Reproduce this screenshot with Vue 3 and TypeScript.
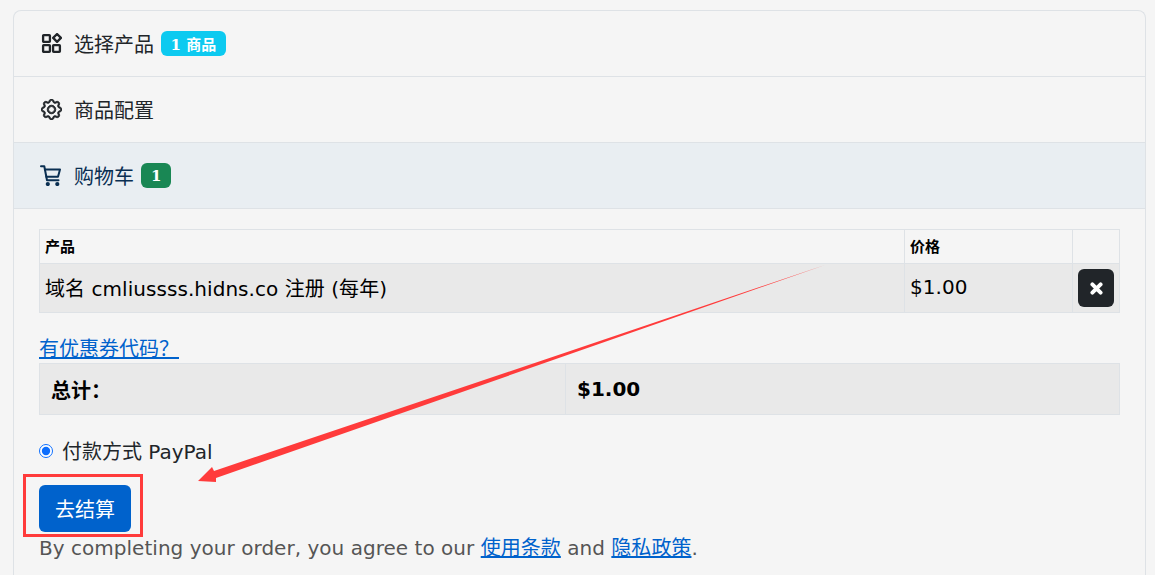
<script setup lang="ts">
</script>

<template>
  <div class="page">
    <section class="accordion">
      <div class="step">
        <svg class="icon" viewBox="0 0 20 20" fill="none" stroke="currentColor" stroke-width="2.200">
          <rect x="2" y="2" width="6.500" height="6.500" rx=".6" />
          <rect x="2" y="11.500" width="6.500" height="6.500" rx=".6" />
          <rect x="11.500" y="11.500" width="6.500" height="6.500" rx=".6" />
          <path d="M15.300 1 19 4.700 15.300 8.400 11.600 4.700z" stroke-linejoin="round" />
        </svg>
        <span class="label">选择产品</span>
        <span class="badge info">1 商品</span>
      </div>
      <div class="step">
        <svg class="icon" viewBox="0 0 16 16" fill="currentColor" stroke="currentColor" stroke-width=".7"><path d="M8 4.754a3.246 3.246 0 1 0 0 6.492 3.246 3.246 0 0 0 0-6.492M5.754 8a2.246 2.246 0 1 1 4.492 0 2.246 2.246 0 0 1-4.492 0"/><path d="M9.796 1.343c-.527-1.790-3.065-1.790-3.592 0l-.094.319a.873.873 0 0 1-1.255.520l-.292-.160c-1.640-.892-3.433.902-2.540 2.541l.159.292a.873.873 0 0 1-.520 1.255l-.319.094c-1.790.527-1.790 3.065 0 3.592l.319.094a.873.873 0 0 1 .520 1.255l-.160.292c-.892 1.640.901 3.434 2.541 2.540l.292-.159a.873.873 0 0 1 1.255.520l.094.319c.527 1.790 3.065 1.790 3.592 0l.094-.319a.873.873 0 0 1 1.255-.520l.292.160c1.640.893 3.434-.902 2.540-2.541l-.159-.292a.873.873 0 0 1 .520-1.255l.319-.094c1.790-.527 1.790-3.065 0-3.592l-.319-.094a.873.873 0 0 1-.520-1.255l.160-.292c.893-1.640-.902-3.433-2.541-2.540l-.292.159a.873.873 0 0 1-1.255-.520zm-2.633.283c.246-.835 1.428-.835 1.674 0l.094.319a1.873 1.873 0 0 0 2.693 1.115l.291-.160c.764-.415 1.600.420 1.184 1.185l-.159.292a1.873 1.873 0 0 0 1.116 2.692l.318.094c.835.246.835 1.428 0 1.674l-.319.094a1.873 1.873 0 0 0-1.115 2.693l.160.291c.415.764-.420 1.600-1.185 1.184l-.291-.159a1.873 1.873 0 0 0-2.693 1.116l-.094.318c-.246.835-1.428.835-1.674 0l-.094-.319a1.873 1.873 0 0 0-2.692-1.115l-.292.160c-.764.415-1.600-.420-1.184-1.185l.159-.291A1.873 1.873 0 0 0 1.945 8.930l-.319-.094c-.835-.246-.835-1.428 0-1.674l.319-.094A1.873 1.873 0 0 0 3.060 4.377l-.160-.292c-.415-.764.420-1.600 1.185-1.184l.292.159a1.873 1.873 0 0 0 2.692-1.115z"/></svg>
        <span class="label">商品配置</span>
      </div>
      <div class="step active">
        <svg class="icon cart" viewBox="0 0 21 21" fill="none" stroke="currentColor" stroke-width="2" stroke-linecap="round" stroke-linejoin="round">
          <path d="M1 1.200H4.300L7 15.300H18.500" />
          <path d="M4.900 4.500H20L18 11.800H6.300" />
          <circle cx="7.800" cy="19" r="1.100" fill="currentColor" />
          <circle cx="17.300" cy="19" r="1.100" fill="currentColor" />
        </svg>
        <span class="label">购物车</span>
        <span class="badge success">1</span>
      </div>
      <div class="body">
        <table class="items">
          <colgroup><col /><col class="price-col" /><col class="action-col" /></colgroup>
          <thead>
            <tr><th>产品</th><th>价格</th><th></th></tr>
          </thead>
          <tbody>
            <tr>
              <td>域名 cmliussss.hidns.co 注册 (每年)</td>
              <td>$1.00</td>
              <td class="action">
                <button class="remove" type="button" aria-label="删除">
                  <svg viewBox="0 0 12 12" width="13" height="13"><path d="M2.200 2.200 9.800 9.800M9.800 2.200 2.200 9.800" stroke="#fff" stroke-width="3.600" stroke-linecap="round" /></svg>
                </button>
              </td>
            </tr>
          </tbody>
        </table>
        <a class="coupon" href="#">有优惠券代码？</a>
        <table class="totals">
          <colgroup><col class="total-col" /><col /></colgroup>
          <tbody>
            <tr><th>总计：</th><th>$1.00</th></tr>
          </tbody>
        </table>
        <label class="payment">
          <input type="radio" checked />
          <span>付款方式 PayPal</span>
        </label>
        <button class="checkout" type="button">去结算</button>
        <p class="terms">By completing your order, you agree to our <a href="#">使用条款</a> and <a href="#">隐私政策</a>.</p>
      </div>
    </section>
    <div class="annotation">
      <div class="frame"></div>
      <svg class="arrow" width="1155" height="575" viewBox="0 0 1155 575">
        <polygon points="825,265 214,471 212,467 198,481 216,482 216,478" fill="#ff3b3b" />
      </svg>
    </div>
  </div>
</template>

<style>
html, body { margin: 0; background: #f5f5f5; }
</style>

<style scoped>
.page {
  position: relative;
  width: 1155px;
  height: 575px;
  overflow: hidden;
  box-sizing: border-box;
  padding: 10px 9px 0 13px;
  background: #f5f5f5;
  font-family: "DejaVu Sans", "Noto Sans CJK SC", sans-serif;
  font-size: 20px;
  color: #212529;
}
.accordion {
  border: 1px solid #dee2e6;
  border-bottom: 0;
  border-radius: 8px 8px 0 0;
  height: 600px;
}
.step {
  display: flex;
  align-items: center;
  height: 65px;
  border-bottom: 1px solid #dee2e6;
  padding-left: 27px;
}
.step.active {
  background: #e9eef2;
  color: #0a2f52;
}
.icon { width: 21px; height: 21px; margin-right: 12px; flex: none; }
.icon.cart { margin-left: -1px; margin-right: 13px; }
.label { line-height: 1; padding-top: 2px; }
.badge {
  margin-left: 7px;
  padding: 0 10px;
  height: 25px;
  border-radius: 6px;
  display: inline-flex;
  align-items: center;
  color: #fff;
  font-family: "DejaVu Serif", "Noto Sans CJK SC", serif;
  font-weight: 700;
  font-size: 15px;
}
.badge.info { background: #0dcaf0; padding: 0 9.5px; }
.badge.success { background: #198754; }
.body { padding: 20px 25px 0; }
table { border-collapse: collapse; width: 1081px; table-layout: fixed; }
.items th, .items td { border: 1px solid #dee2e6; padding: 0 5px; text-align: left; }
.items th { height: 31px; padding-bottom: 2px; font-size: 15px; color: #000; font-weight: 700; }
.items td { height: 46px; padding-bottom: 2px; background: #e9e9e9; color: #000; letter-spacing: .05px; }
.items td.action { padding-bottom: 0; }
.price-col { width: 168px; }
.action-col { width: 47px; }
.total-col { width: 526px; }
.remove {
  display: flex;
  align-items: center;
  justify-content: center;
  width: 36px;
  height: 38px;
  padding: 0;
  border: 0;
  border-radius: 6px;
  background: #212529;
}
.coupon {
  display: block;
  margin-top: 22px;
  width: max-content;
  line-height: 28px;
  color: #0062cc;
}
.totals th {
  height: 50px;
  border: 1px solid #dee2e6;
  background: #e9e9e9;
  color: #000;
  text-align: left;
  padding: 0 11px;
  font-weight: 700;
}
.payment { display: flex; align-items: center; margin-top: 20px; height: 30px; }
.payment input { width: 14px; height: 14px; margin: 2px 9px 0 0; accent-color: #0d6efd; }
.checkout {
  display: block;
  margin-top: 20px;
  width: 92px;
  height: 47px;
  border: 0;
  border-radius: 6px;
  background: #0062cc;
  color: #fff;
  font: inherit;
}
.terms { margin: 0; line-height: 32px; color: #555; white-space: nowrap; letter-spacing: .03px; }
.terms a { color: #0062cc; }
.frame {
  position: absolute;
  left: 23px;
  top: 474px;
  width: 114px;
  height: 57px;
  border: 3px solid #ff3b3b;
}
.arrow { position: absolute; left: 0; top: 0; }
</style>
